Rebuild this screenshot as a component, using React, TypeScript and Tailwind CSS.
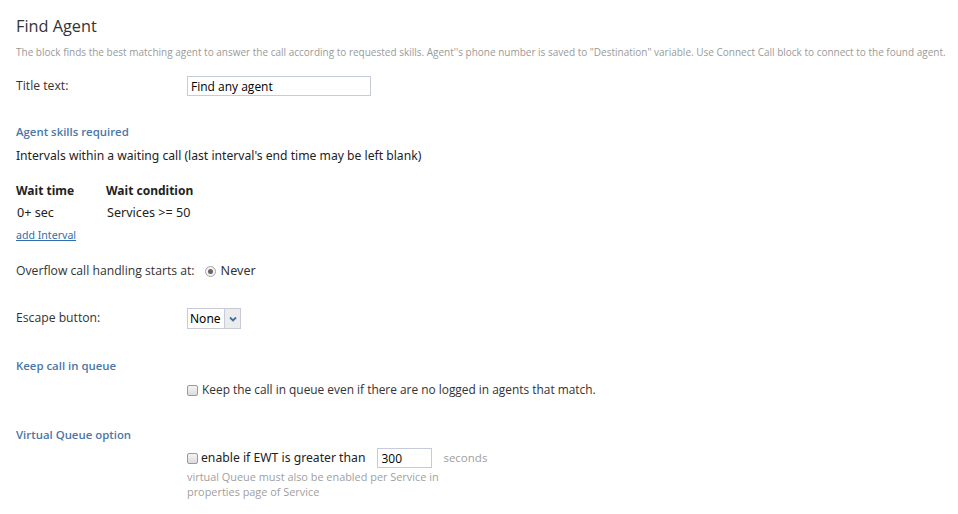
import React from 'react';

const openSans = "font-['Open_Sans',sans-serif]";
const segoe = "font-['Noto_Sans','DejaVu_Sans',sans-serif]";

const SectionTitle: React.FC<{ children: React.ReactNode; className?: string }> = ({ children, className }) => (
  <div className={`h-4 flex items-center text-[11.4px] font-semibold text-[#4a77a6] ${openSans} ${className ?? ''}`}>
    {children}
  </div>
);

const Checkbox: React.FC = () => (
  <span className="inline-block w-[11px] h-[11px] rounded-[2px] border border-[#9a9a9a] bg-gradient-to-b from-[#f4f4f4] to-[#dcdcdc]" />
);

const App: React.FC = () => {
  return (
    <div className={`w-[958px] h-[514px] bg-white pl-4 text-[#333] overflow-hidden ${openSans}`}>
      {/* Header */}
      <h1 className="mt-[14px] h-6 flex items-center text-[16.3px] font-normal text-[#333]">Find Agent</h1>
      <p className="mt-[6px] h-4 flex items-center text-[10px] text-[#9a9a9a] whitespace-nowrap">
        The block finds the best matching agent to answer the call according to requested skills. Agent''s phone number is saved to "Destination" variable. Use Connect Call block to connect to the found agent.
      </p>

      {/* Title text */}
      <div className="mt-4 h-5 flex items-center">
        <label className="w-[171px] text-[12.2px]">Title text:</label>
        <input
          type="text"
          defaultValue="Find any agent"
          className="w-[184px] h-5 border border-[#c7cad9] px-[3px] text-[12px] text-black outline-none"
        />
      </div>

      {/* Agent skills */}
      <SectionTitle className="mt-7">Agent skills required</SectionTitle>
      <div className={`mt-[7px] h-[18px] flex items-center text-[12.15px] text-[#222] ${segoe}`}>
        Intervals within a waiting call (last interval's end time may be left blank)
      </div>

      <div className={`mt-[17px] h-[18px] flex items-center text-[12px] font-bold text-[#222] ${segoe}`}>
        <span className="w-[90px]">Wait time</span>
        <span>Wait condition</span>
      </div>
      <div className={`mt-1 h-[18px] flex items-center text-[12.6px] text-[#222] ${segoe}`}>
        <span className="w-[91px] pl-px">0+ sec</span>
        <span>Services &gt;= 50</span>
      </div>
      <div className={`mt-[7px] h-[14px] flex items-center text-[10.6px] ${segoe}`}>
        <a href="#" className="text-[#2f6fae] underline">add Interval</a>
      </div>

      {/* Overflow */}
      <div className="mt-[19px] h-[18px] flex items-center text-[12.2px]">
        <span className="mr-[10px]">Overflow call handling starts at:</span>
        <span className="w-[11px] h-[11px] rounded-full border border-[#a8a8a8] bg-[#f2f2f2] flex items-center justify-center">
          <span className="w-[5px] h-[5px] rounded-full bg-[#666]" />
        </span>
        <span className={`ml-[5px] text-[12.6px] ${segoe}`}>Never</span>
      </div>

      {/* Escape button */}
      <div className="mt-7 h-[21px] flex items-center">
        <label className="w-[171px] text-[12.2px]">Escape button:</label>
        <div className="flex h-[21px] border border-[#c7cad9]">
          <span className={`w-[36px] flex items-center pl-[2px] text-[12px] text-black ${segoe}`}>None</span>
          <span className="w-[16px] flex items-center justify-center border-l border-[#c7cad9] bg-[#ececec]">
            <svg width="8" height="6" viewBox="0 0 8 6">
              <path d="M1 1.5 L4 4.5 L7 1.5" fill="none" stroke="#3e6fa6" strokeWidth="1.8" />
            </svg>
          </span>
        </div>
      </div>

      {/* Keep call in queue */}
      <SectionTitle className="mt-[29px]">Keep call in queue</SectionTitle>
      <div className="mt-[7px] h-[18px] flex items-center pl-[171px] text-[11.9px]">
        <Checkbox />
        <span className="ml-[4px]">Keep the call in queue even if there are no logged in agents that match.</span>
      </div>

      {/* Virtual queue */}
      <SectionTitle className="mt-7">Virtual Queue option</SectionTitle>
      <div className="mt-[5px] h-5 flex items-center pl-[171px]">
        <Checkbox />
        <span className={`ml-[3px] text-[12.2px] text-[#222] ${segoe}`}>enable if EWT is greater than</span>
        <input
          type="text"
          defaultValue="300"
          className="ml-[12px] w-[55px] h-5 border border-[#c7cad9] px-[3px] text-[12px] text-black outline-none"
        />
        <span className="ml-[11px] text-[11.5px] text-[#a0a0a0]">seconds</span>
      </div>
      <p className="mt-px pl-[171px] w-[430px] text-[10.9px] leading-[15px] text-[#a0a0a0]">
        virtual Queue must also be enabled per Service in properties page of Service
      </p>
    </div>
  );
};

export default App;
